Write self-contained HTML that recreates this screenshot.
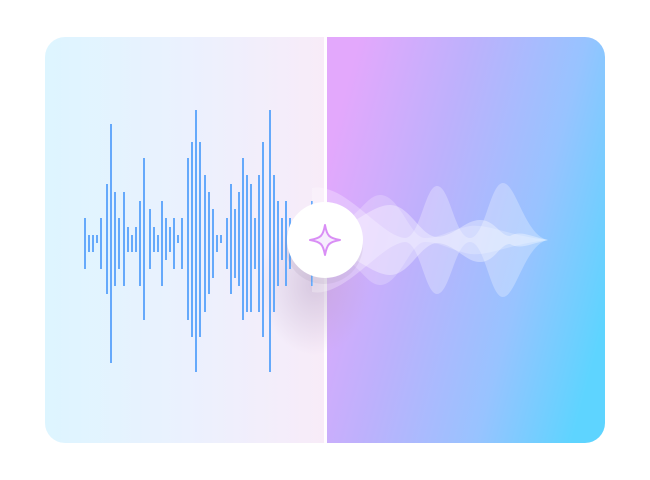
<!DOCTYPE html>
<html><head><meta charset="utf-8"><style>
html,body{margin:0;padding:0;background:#fff;width:650px;height:480px;overflow:hidden}
</style></head><body>
<svg width="650" height="480" viewBox="0 0 650 480" xmlns="http://www.w3.org/2000/svg">
<defs>
<linearGradient id="lg" x1="0" y1="0" x2="1" y2="0">
<stop offset="0" stop-color="#ddf5ff"/><stop offset="0.5" stop-color="#ebf1fe"/><stop offset="1" stop-color="#f8ebf8"/>
</linearGradient>
<linearGradient id="rg" x1="0" y1="0.3" x2="1" y2="0.7">
<stop offset="0" stop-color="#e3a8fc"/><stop offset="0.35" stop-color="#bdb1fc"/><stop offset="0.7" stop-color="#98c3ff"/><stop offset="1" stop-color="#5ed4ff"/>
</linearGradient>
<clipPath id="card"><rect x="45" y="37" width="560" height="406" rx="20"/></clipPath>
<radialGradient id="sh" cx="0.5" cy="0.5" r="0.5">
<stop offset="0" stop-color="#b9a6c8" stop-opacity="0.5"/><stop offset="1" stop-color="#b9a6c8" stop-opacity="0"/>
</radialGradient>
</defs>
<g clip-path="url(#card)">
<rect x="45" y="37" width="282" height="406" fill="url(#lg)"/>
<rect x="327" y="37" width="278" height="406" fill="url(#rg)"/>
<rect x="324" y="37" width="3" height="406" fill="#fff" opacity="0.9"/>
<ellipse cx="315" cy="285" rx="55" ry="70" fill="url(#sh)"/>
</g>
<g stroke="#65a9fb" stroke-width="2">
<line x1="85" y1="218" x2="85" y2="269"/>
<line x1="89" y1="235" x2="89" y2="252"/>
<line x1="93" y1="235" x2="93" y2="252"/>
<line x1="97" y1="235" x2="97" y2="243"/>
<line x1="101" y1="218" x2="101" y2="269"/>
<line x1="107" y1="184" x2="107" y2="294"/>
<line x1="111" y1="124" x2="111" y2="363"/>
<line x1="115" y1="192" x2="115" y2="286"/>
<line x1="119" y1="218" x2="119" y2="269"/>
<line x1="124" y1="192" x2="124" y2="286"/>
<line x1="128" y1="227" x2="128" y2="252"/>
<line x1="132" y1="235" x2="132" y2="252"/>
<line x1="136" y1="227" x2="136" y2="252"/>
<line x1="140" y1="201" x2="140" y2="286"/>
<line x1="144" y1="158" x2="144" y2="320"/>
<line x1="150" y1="209" x2="150" y2="269"/>
<line x1="154" y1="227" x2="154" y2="252"/>
<line x1="158" y1="235" x2="158" y2="252"/>
<line x1="162" y1="201" x2="162" y2="286"/>
<line x1="166" y1="218" x2="166" y2="260"/>
<line x1="170" y1="227" x2="170" y2="252"/>
<line x1="174" y1="218" x2="174" y2="269"/>
<line x1="178" y1="235" x2="178" y2="243"/>
<line x1="182" y1="218" x2="182" y2="269"/>
<line x1="188" y1="158" x2="188" y2="320"/>
<line x1="192" y1="142" x2="192" y2="337"/>
<line x1="196" y1="110" x2="196" y2="372"/>
<line x1="200" y1="142" x2="200" y2="337"/>
<line x1="205" y1="175" x2="205" y2="312"/>
<line x1="209" y1="192" x2="209" y2="294"/>
<line x1="213" y1="209" x2="213" y2="278"/>
<line x1="217" y1="235" x2="217" y2="252"/>
<line x1="221" y1="235" x2="221" y2="243"/>
<line x1="227" y1="218" x2="227" y2="269"/>
<line x1="231" y1="184" x2="231" y2="294"/>
<line x1="235" y1="209" x2="235" y2="278"/>
<line x1="239" y1="192" x2="239" y2="286"/>
<line x1="243" y1="158" x2="243" y2="320"/>
<line x1="247" y1="175" x2="247" y2="312"/>
<line x1="251" y1="184" x2="251" y2="312"/>
<line x1="255" y1="218" x2="255" y2="269"/>
<line x1="259" y1="175" x2="259" y2="312"/>
<line x1="263" y1="142" x2="263" y2="337"/>
<line x1="270" y1="110" x2="270" y2="372"/>
<line x1="274" y1="175" x2="274" y2="312"/>
<line x1="278" y1="201" x2="278" y2="286"/>
<line x1="282" y1="218" x2="282" y2="260"/>
<line x1="286" y1="201" x2="286" y2="286"/>
<line x1="290" y1="218" x2="290" y2="269"/>
<line x1="312" y1="201" x2="312" y2="286"/>
</g>
<g fill="#fff">
<path opacity="0.28" d="M312,188 C345,182 380,236 405,238 C420,238 425,186 437,186 C450,186 455,238 470,238 C485,238 490,183 503,183 C516,183 525,236 548,240 C525,244 516,297 503,297 C490,297 485,242 470,242 C455,242 450,294 437,294 C425,294 420,242 405,242 C380,244 345,298 312,292 Z"/>
<path opacity="0.35" d="M330,232 C350,228 372,205 390,205 C410,205 420,236 437,237 C455,236 465,220 480,220 C495,220 500,236 510,236 C520,230 530,236 548,240 C530,244 520,250 510,244 C500,244 495,262 480,262 C465,262 455,244 437,243 C420,244 410,275 390,275 C372,275 350,252 330,248 Z"/>
<path opacity="0.22" d="M330,225 C355,225 365,195 380,195 C400,195 410,238 425,238 C440,238 450,230 470,226 C490,224 510,236 548,240 C510,244 490,256 470,254 C450,250 440,242 425,242 C410,242 400,285 380,285 C365,285 355,255 330,255 Z"/>
</g>
<circle cx="324" cy="245" r="39" fill="#8a7aa0" opacity="0.12"/>
<circle cx="325" cy="240" r="38" fill="#fff"/>
<path d="M325,225 C327,236 329,238 340,240 C329,242 327,244 325,255 C323,244 321,242 310,240 C321,238 323,236 325,225 Z" fill="#f6eefd" stroke="#d98ef5" stroke-width="2" stroke-linejoin="round"/>
</svg>
</body></html>
